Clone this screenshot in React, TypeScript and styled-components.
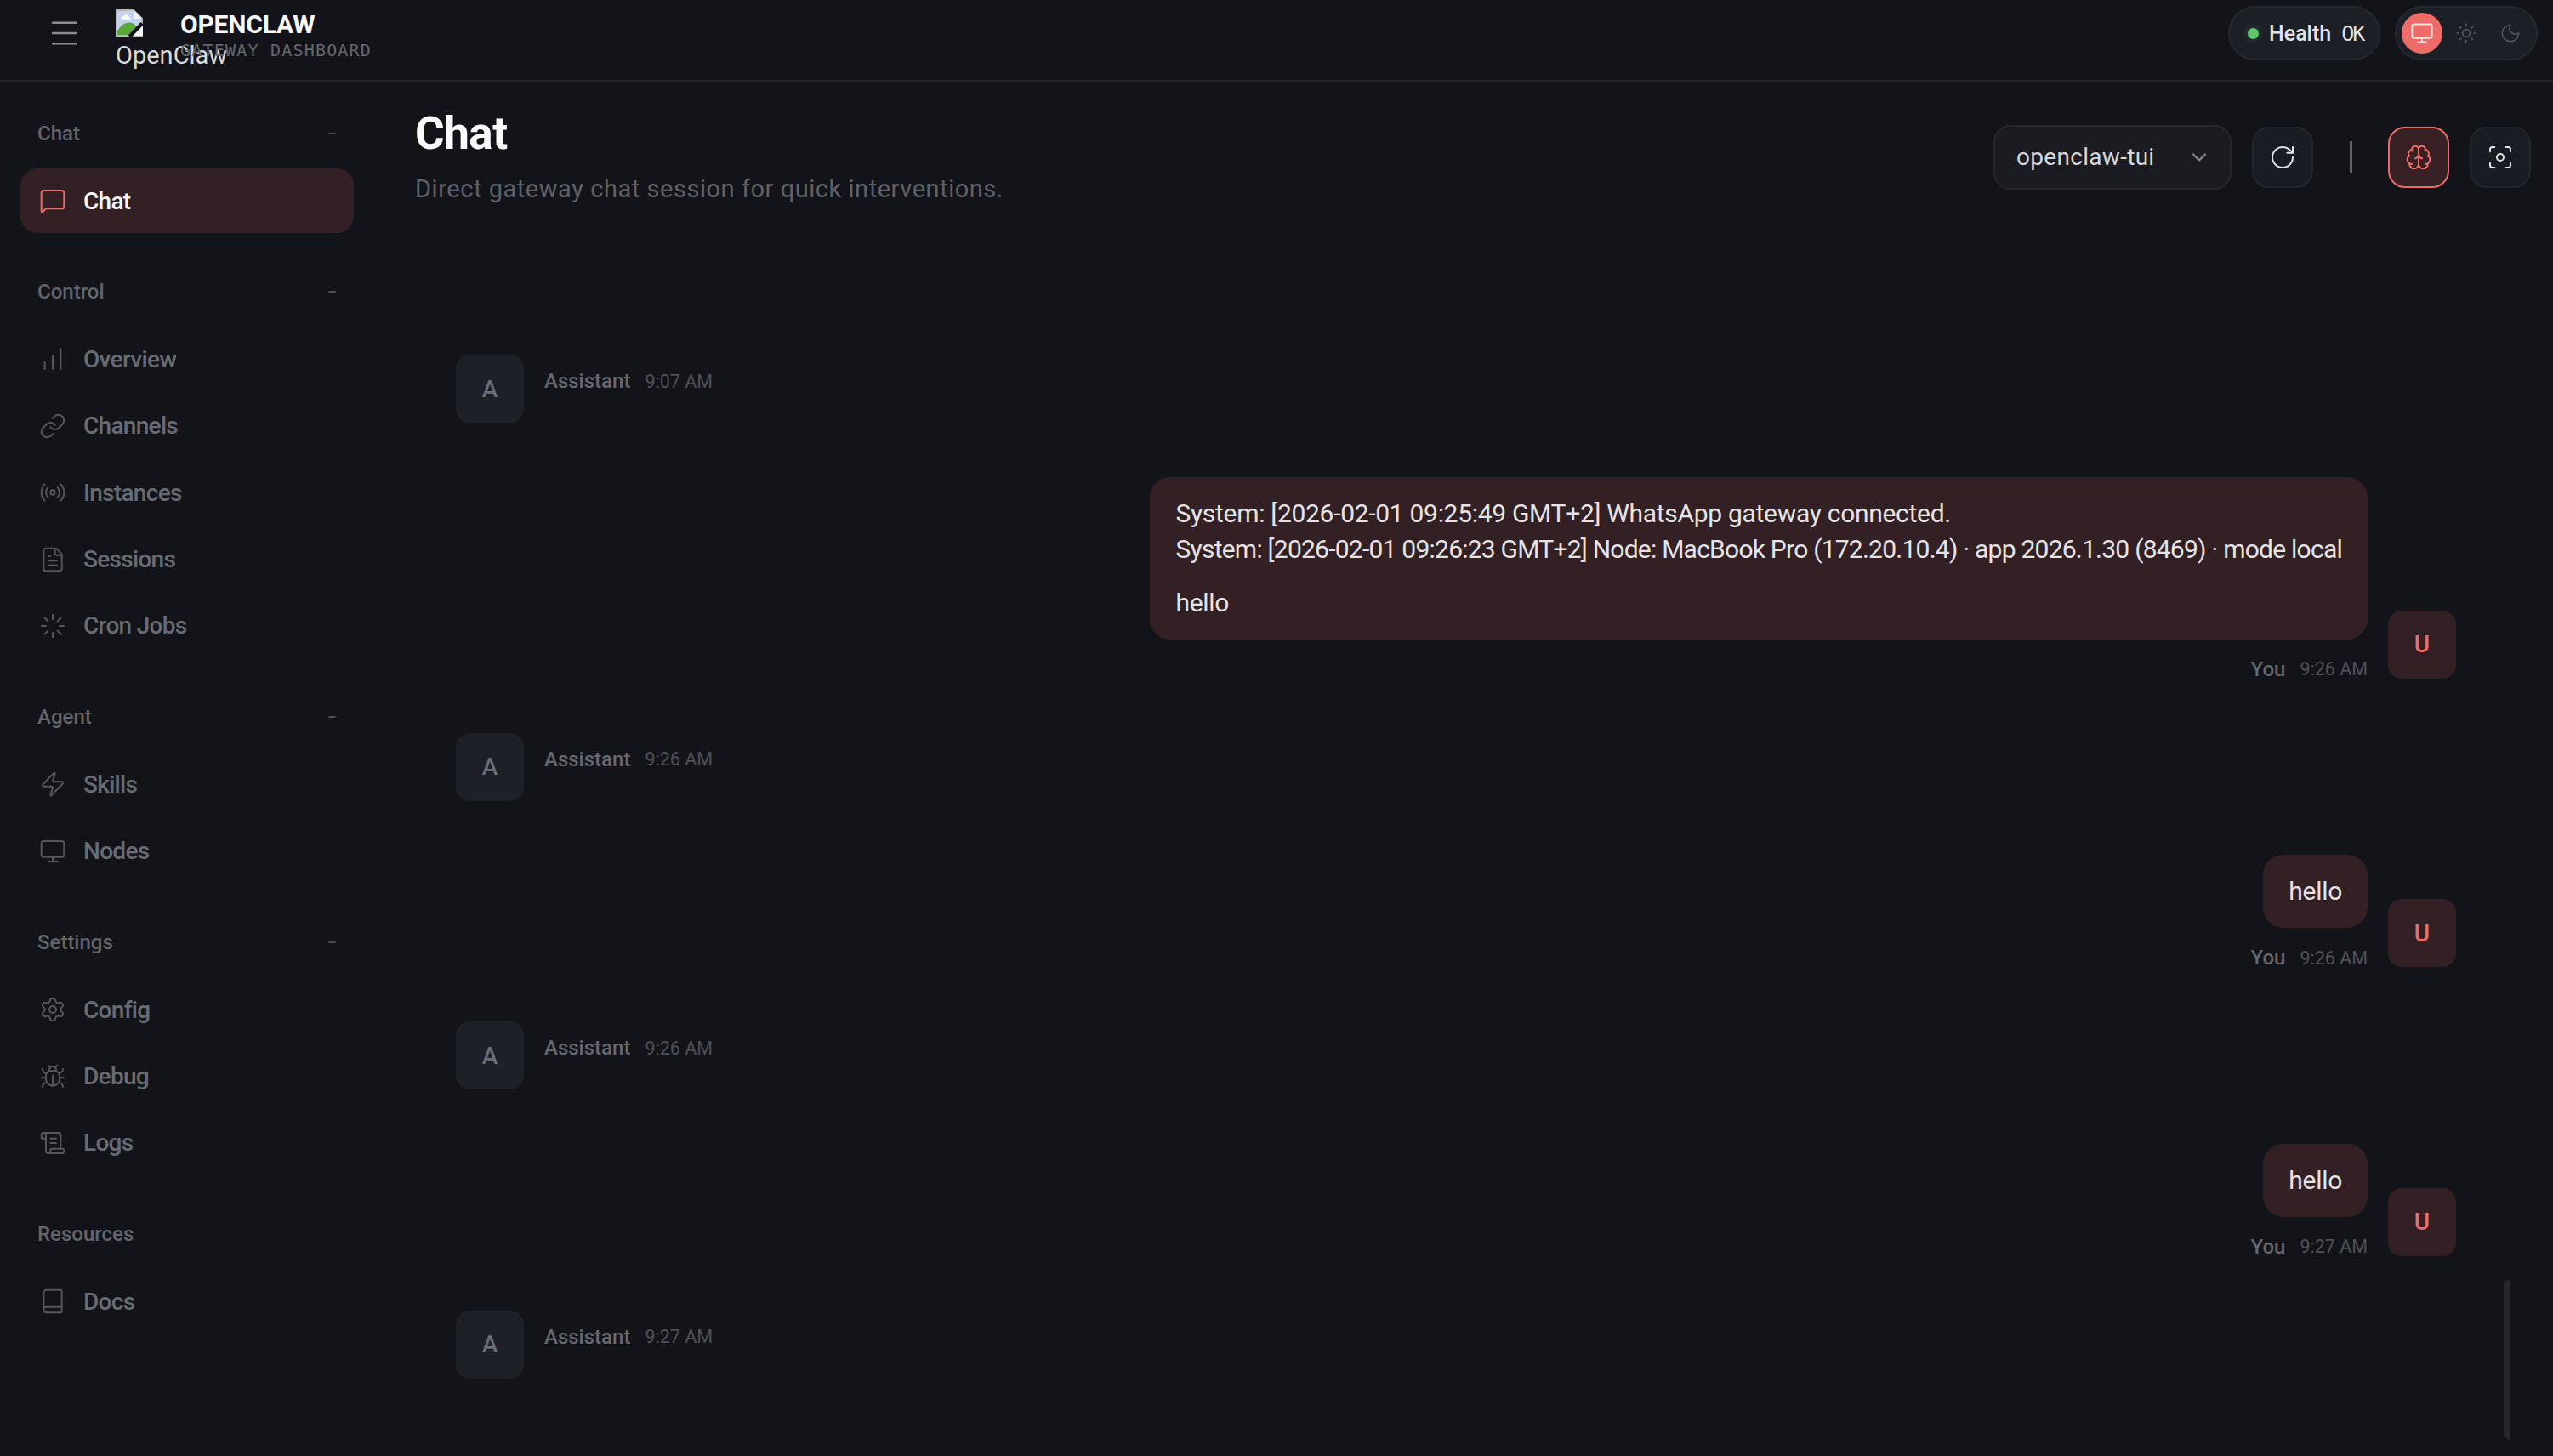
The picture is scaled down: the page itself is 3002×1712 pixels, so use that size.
import React from "react";
import styled, { createGlobalStyle } from "styled-components";
import {
  Menu, MessageSquare, ChartNoAxesColumnIncreasing, Link as LinkIcon, Radio, FileText, Loader, Zap,
  Monitor, Settings, Bug, ScrollText, Book, Sun, Moon, ChevronDown, RotateCw, Brain, Focus,
} from "lucide-react";

const SANS = `"Roboto", "Inter", "Liberation Sans", sans-serif`;
const MONO = `"DejaVu Sans Mono", "Liberation Mono", monospace`;
const BG = "#12141a";
const ACCENT = "#ee6b67";
const TINT = "#332025";

const Global = createGlobalStyle`
  html, body { margin: 0; padding: 0; height: 100%; background: ${BG}; overflow: hidden; }
  #root { height: 100%; }
  * { box-sizing: border-box; }
  body { font-family: ${SANS}; color: #e4e4e7; }
`;

const Shell = styled.div`
  display: flex;
  flex-direction: column;
  height: 1712px;
  background: ${BG};
`;

const TopBar = styled.header`
  display: flex;
  align-items: center;
  justify-content: space-between;
  height: 96px;
  flex: none;
  padding: 0 18px 16px 54px;
  border-bottom: 2px solid #25272d;
`;

const Left = styled.div`
  display: flex;
  align-items: center;
`;

const MenuButton = styled.button`
  display: flex;
  align-items: center;
  justify-content: center;
  width: 44px;
  height: 44px;
  padding: 0;
  margin-right: 38px;
  border: 0;
  background: none;
  color: #8d8e92;
`;

const LogoBox = styled.div`
  width: 76px;
  height: 78px;
  padding-top: 11px;
  font-size: 29px;
  line-height: 36px;
  color: #d9d9dc;
  white-space: nowrap;
  svg { display: block; margin-bottom: 4px; }
`;

const Brand = styled.div`
  display: flex;
  flex-direction: column;
`;

const BrandName = styled.div`
  font-size: 30px;
  line-height: 34px;
  font-weight: 700;
  letter-spacing: -0.2px;
  color: #fafafa;
  margin-top: 4px;
`;

const BrandSub = styled.div`
  font-family: ${MONO};
  font-size: 20px;
  line-height: 24px;
  margin-top: 1px;
  letter-spacing: 1.2px;
  color: #65676d;
`;

const Right = styled.div`
  display: flex;
  align-items: center;
  gap: 17px;
`;

const Pill = styled.div`
  display: flex;
  align-items: center;
  height: 64px;
  border-radius: 32px;
  background: #1c1f26;
  border: 2px solid #25282e;
`;

const HealthPill = styled(Pill)`
  padding: 0 20px;
  gap: 12px;
  width: 179px;
  font-size: 25px;
  font-weight: 500;
  color: #e2e2e5;
`;

const Dot = styled.span`
  width: 13px;
  height: 13px;
  flex: none;
  margin-left: 1px;
  border-radius: 50%;
  background: #5dc86c;
  box-shadow: 0 0 8px rgba(93, 200, 108, 0.35);
`;

const OkText = styled.span`
  font-family: ${MONO};
  font-size: 25px;
  font-weight: 400;
  letter-spacing: -2px;
`;

const ThemePill = styled(Pill)`
  padding: 0 6px;
  gap: 4px;
`;

const ThemeBtn = styled.span<{ $active?: boolean }>`
  display: flex;
  align-items: center;
  justify-content: center;
  width: 48px;
  height: 48px;
  border-radius: 50%;
  background: ${(p) => (p.$active ? ACCENT : "transparent")};
  color: ${(p) => (p.$active ? "#fde4e2" : "#54565c")};
`;

const Body = styled.div`
  display: flex;
  flex: 1;
  min-height: 0;
`;

const Sidebar = styled.nav`
  width: 440px;
  flex: none;
  display: flex;
  flex-direction: column;
  gap: 53.4px;
  padding: 45px 24px 0;
`;

const Group = styled.section`
  display: flex;
  flex-direction: column;
`;

const GroupLabel = styled.div`
  display: flex;
  align-items: center;
  justify-content: space-between;
  height: 32px;
  margin-bottom: 25px;
  padding: 0 20px;
  font-size: 24px;
  font-weight: 500;
  color: #64666c;
`;

const Collapse = styled.span`
  font-size: 20px;
  color: #4b4d53;
`;

const Items = styled.div`
  display: flex;
  flex-direction: column;
  gap: 2.4px;
`;

const Item = styled.a<{ $active?: boolean }>`
  display: flex;
  align-items: center;
  gap: 20px;
  height: 76px;
  padding: 0 22px;
  border-radius: 20px;
  font-size: 28px;
  font-weight: 500;
  letter-spacing: -0.7px;
  background: ${(p) => (p.$active ? TINT : "transparent")};
  color: ${(p) => (p.$active ? "#f4f4f5" : "#696b72")};
  svg { color: ${(p) => (p.$active ? ACCENT : "#55575d")}; flex: none; }
`;

const Main = styled.main`
  position: relative;
  flex: 1;
  min-width: 0;
  display: flex;
  flex-direction: column;
  padding: 31px 26px 0 48px;
`;

const Header = styled.div`
  display: flex;
  align-items: center;
  justify-content: space-between;
  height: 115px;
  flex: none;
`;

const Titles = styled.div`
  display: flex;
  flex-direction: column;
`;

const Title = styled.h1`
  margin: 0;
  font-size: 53px;
  line-height: 60px;
  font-weight: 700;
  letter-spacing: -0.5px;
  color: #fafafa;
`;

const Subtitle = styled.p`
  margin: 15px 0 0;
  font-size: 29px;
  line-height: 40px;
  letter-spacing: 0.54px;
  color: #5f6168;
`;

const Controls = styled.div`
  display: flex;
  align-items: center;
  gap: 24px;
`;

const Select = styled.div`
  display: flex;
  align-items: center;
  justify-content: space-between;
  width: 280px;
  height: 76px;
  padding: 0 22px 0 25px;
  border-radius: 20px;
  background: #1a1c21;
  border: 2px solid #25272c;
  font-size: 28px;
  letter-spacing: 0.3px;
  color: #d8d8db;
  svg { color: #85868a; }
`;

const IconBtn = styled.span<{ $on?: boolean }>`
  display: flex;
  align-items: center;
  justify-content: center;
  width: 72px;
  height: 72px;
  border-radius: 20px;
  background: ${(p) => (p.$on ? "#372125" : "#191c22")};
  border: 2px solid ${(p) => (p.$on ? ACCENT : "#23262c")};
  color: ${(p) => (p.$on ? ACCENT : "#e2e2e5")};
`;

const Separator = styled.span`
  width: 3px;
  height: 38px;
  margin: 0 18.5px;
  background: #5f6165;
`;

const Thread = styled.div`
  display: flex;
  flex-direction: column;
  gap: 63.8px;
  padding: 175px 88px 0 48px;
`;

const Row = styled.div<{ $user?: boolean }>`
  display: flex;
  gap: 24px;
  justify-content: ${(p) => (p.$user ? "flex-end" : "flex-start")};
  align-items: ${(p) => (p.$user ? "flex-end" : "flex-start")};
`;

const Avatar = styled.div<{ $user?: boolean }>`
  width: 80px;
  height: 80px;
  flex: none;
  display: flex;
  align-items: center;
  justify-content: center;
  border-radius: 16px;
  font-size: 28px;
  font-weight: 500;
  background: ${(p) => (p.$user ? TINT : "#1d2027")};
  color: ${(p) => (p.$user ? ACCENT : "#6a6d75")};
`;

const Stack = styled.div`
  display: flex;
  flex-direction: column;
  align-items: flex-end;
  gap: 24px;
`;

const Bubble = styled.div`
  padding: 22px 30px;
  border-radius: 24px;
  background: ${TINT};
  color: #e6e4e5;
  font-size: 30px;
  line-height: 42px;
  letter-spacing: -0.3px;
  white-space: nowrap;
`;

const BubbleLine = styled.div<{ $tight?: boolean }>`
  letter-spacing: ${(p) => (p.$tight ? "-0.76px" : "inherit")};
`;

const Gap = styled.div`
  height: 21px;
`;

const Meta = styled.div<{ $assistant?: boolean }>`
  display: flex;
  align-items: center;
  gap: 17px;
  height: 22px;
  margin-top: ${(p) => (p.$assistant ? "20px" : "0")};
`;

const Who = styled.span`
  font-size: 24px;
  font-weight: 500;
  color: #666870;
`;

const When = styled.span`
  font-size: 21.5px;
  color: #4f5157;
`;

const ScrollThumb = styled.div`
  position: absolute;
  right: 50px;
  bottom: 19px;
  width: 8px;
  height: 189px;
  border-radius: 8px 0 0 8px;
  background: #25272c;
`;

const BrokenImage = () => (
  <svg width="32" height="32" viewBox="0 0 16 16">
    <path d="M0.5 0.5H10.5L15.5 5.5V15.5H0.5Z" fill="#c5d3ee" stroke="#b9b9bb" strokeWidth="1" />
    <path d="M10.5 0.5V5.5H15.5Z" fill="#f3f3f3" />
    <path d="M3 5.6c0-1 .9-1.6 1.8-1.4C5.2 3.4 6 3 6.8 3.4c.7.3 1 .9 1 1.4.7 0 1.2.4 1.2 1H3Z" fill="#fff" />
    <path d="M1 15V13c1.4-3.3 4.3-5.2 6.8-5.2 2.4 0 4 1.2 5.2 3.4V15Z" fill="#5aa838" />
    <path d="M16 15.5H9.5L16 8Z" fill="#f5f5f5" />
    <path d="M8.2 16L15.6 8.2" stroke="#0e0e10" strokeWidth="2.2" />
  </svg>
);

type NavItem = { label: string; icon: React.ReactNode; active?: boolean };
const ic = { size: 32, strokeWidth: 1.5 };
const groups: { label: string; collapse: boolean; items: NavItem[] }[] = [
  { label: "Chat", collapse: true, items: [{ label: "Chat", icon: <MessageSquare {...ic} />, active: true }] },
  {
    label: "Control",
    collapse: true,
    items: [
      { label: "Overview", icon: <ChartNoAxesColumnIncreasing {...ic} /> },
      { label: "Channels", icon: <LinkIcon {...ic} /> },
      { label: "Instances", icon: <Radio {...ic} /> },
      { label: "Sessions", icon: <FileText {...ic} /> },
      { label: "Cron Jobs", icon: <Loader {...ic} /> },
    ],
  },
  {
    label: "Agent",
    collapse: true,
    items: [
      { label: "Skills", icon: <Zap {...ic} /> },
      { label: "Nodes", icon: <Monitor {...ic} /> },
    ],
  },
  {
    label: "Settings",
    collapse: true,
    items: [
      { label: "Config", icon: <Settings {...ic} /> },
      { label: "Debug", icon: <Bug {...ic} /> },
      { label: "Logs", icon: <ScrollText {...ic} /> },
    ],
  },
  { label: "Resources", collapse: false, items: [{ label: "Docs", icon: <Book {...ic} /> }] },
];

const AssistantRow = ({ time }: { time: string }) => (
  <Row>
    <Avatar>A</Avatar>
    <Meta $assistant>
      <Who>Assistant</Who>
      <When>{time}</When>
    </Meta>
  </Row>
);

const UserRow = ({ time, children }: { time: string; children: React.ReactNode }) => (
  <Row $user>
    <Stack>
      <Bubble>{children}</Bubble>
      <Meta>
        <Who>You</Who>
        <When>{time}</When>
      </Meta>
    </Stack>
    <Avatar $user>U</Avatar>
  </Row>
);

export default function App() {
  return (
    <Shell>
      <Global />
      <TopBar>
        <Left>
          <MenuButton>
            <Menu size={42} strokeWidth={1.3} />
          </MenuButton>
          <LogoBox>
            <BrokenImage />
            OpenClaw
          </LogoBox>
          <Brand>
            <BrandName>OPENCLAW</BrandName>
            <BrandSub>GATEWAY DASHBOARD</BrandSub>
          </Brand>
        </Left>
        <Right>
          <HealthPill>
            <Dot />
            <span>Health</span>
            <OkText>OK</OkText>
          </HealthPill>
          <ThemePill>
            <ThemeBtn $active>
              <Monitor size={28} strokeWidth={1.6} />
            </ThemeBtn>
            <ThemeBtn>
              <Sun size={26} strokeWidth={1.5} />
            </ThemeBtn>
            <ThemeBtn>
              <Moon size={26} strokeWidth={1.5} />
            </ThemeBtn>
          </ThemePill>
        </Right>
      </TopBar>
      <Body>
        <Sidebar>
          {groups.map((g) => (
            <Group key={g.label}>
              <GroupLabel>
                <span>{g.label}</span>
                {g.collapse && <Collapse>−</Collapse>}
              </GroupLabel>
              <Items>
                {g.items.map((it) => (
                  <Item key={it.label} $active={it.active}>
                    {it.icon}
                    {it.label}
                  </Item>
                ))}
              </Items>
            </Group>
          ))}
        </Sidebar>
        <Main>
          <Header>
            <Titles>
              <Title>Chat</Title>
              <Subtitle>Direct gateway chat session for quick interventions.</Subtitle>
            </Titles>
            <Controls>
              <Select>
                openclaw-tui
                <ChevronDown size={28} strokeWidth={2} />
              </Select>
              <IconBtn>
                <RotateCw size={32} strokeWidth={1.5} />
              </IconBtn>
              <Separator />
              <IconBtn $on>
                <Brain size={32} strokeWidth={1.5} />
              </IconBtn>
              <IconBtn>
                <Focus size={32} strokeWidth={1.5} />
              </IconBtn>
            </Controls>
          </Header>
          <Thread>
            <AssistantRow time="9:07 AM" />
            <UserRow time="9:26 AM">
              <BubbleLine>System: [2026-02-01 09:25:49 GMT+2] WhatsApp gateway connected.</BubbleLine>
              <BubbleLine $tight>System: [2026-02-01 09:26:23 GMT+2] Node: MacBook Pro (172.20.10.4) · app 2026.1.30 (8469) · mode local</BubbleLine>
              <Gap />
              <BubbleLine>hello</BubbleLine>
            </UserRow>
            <AssistantRow time="9:26 AM" />
            <UserRow time="9:26 AM">hello</UserRow>
            <AssistantRow time="9:26 AM" />
            <UserRow time="9:27 AM">hello</UserRow>
            <AssistantRow time="9:27 AM" />
          </Thread>
          <ScrollThumb />
        </Main>
      </Body>
    </Shell>
  );
}
